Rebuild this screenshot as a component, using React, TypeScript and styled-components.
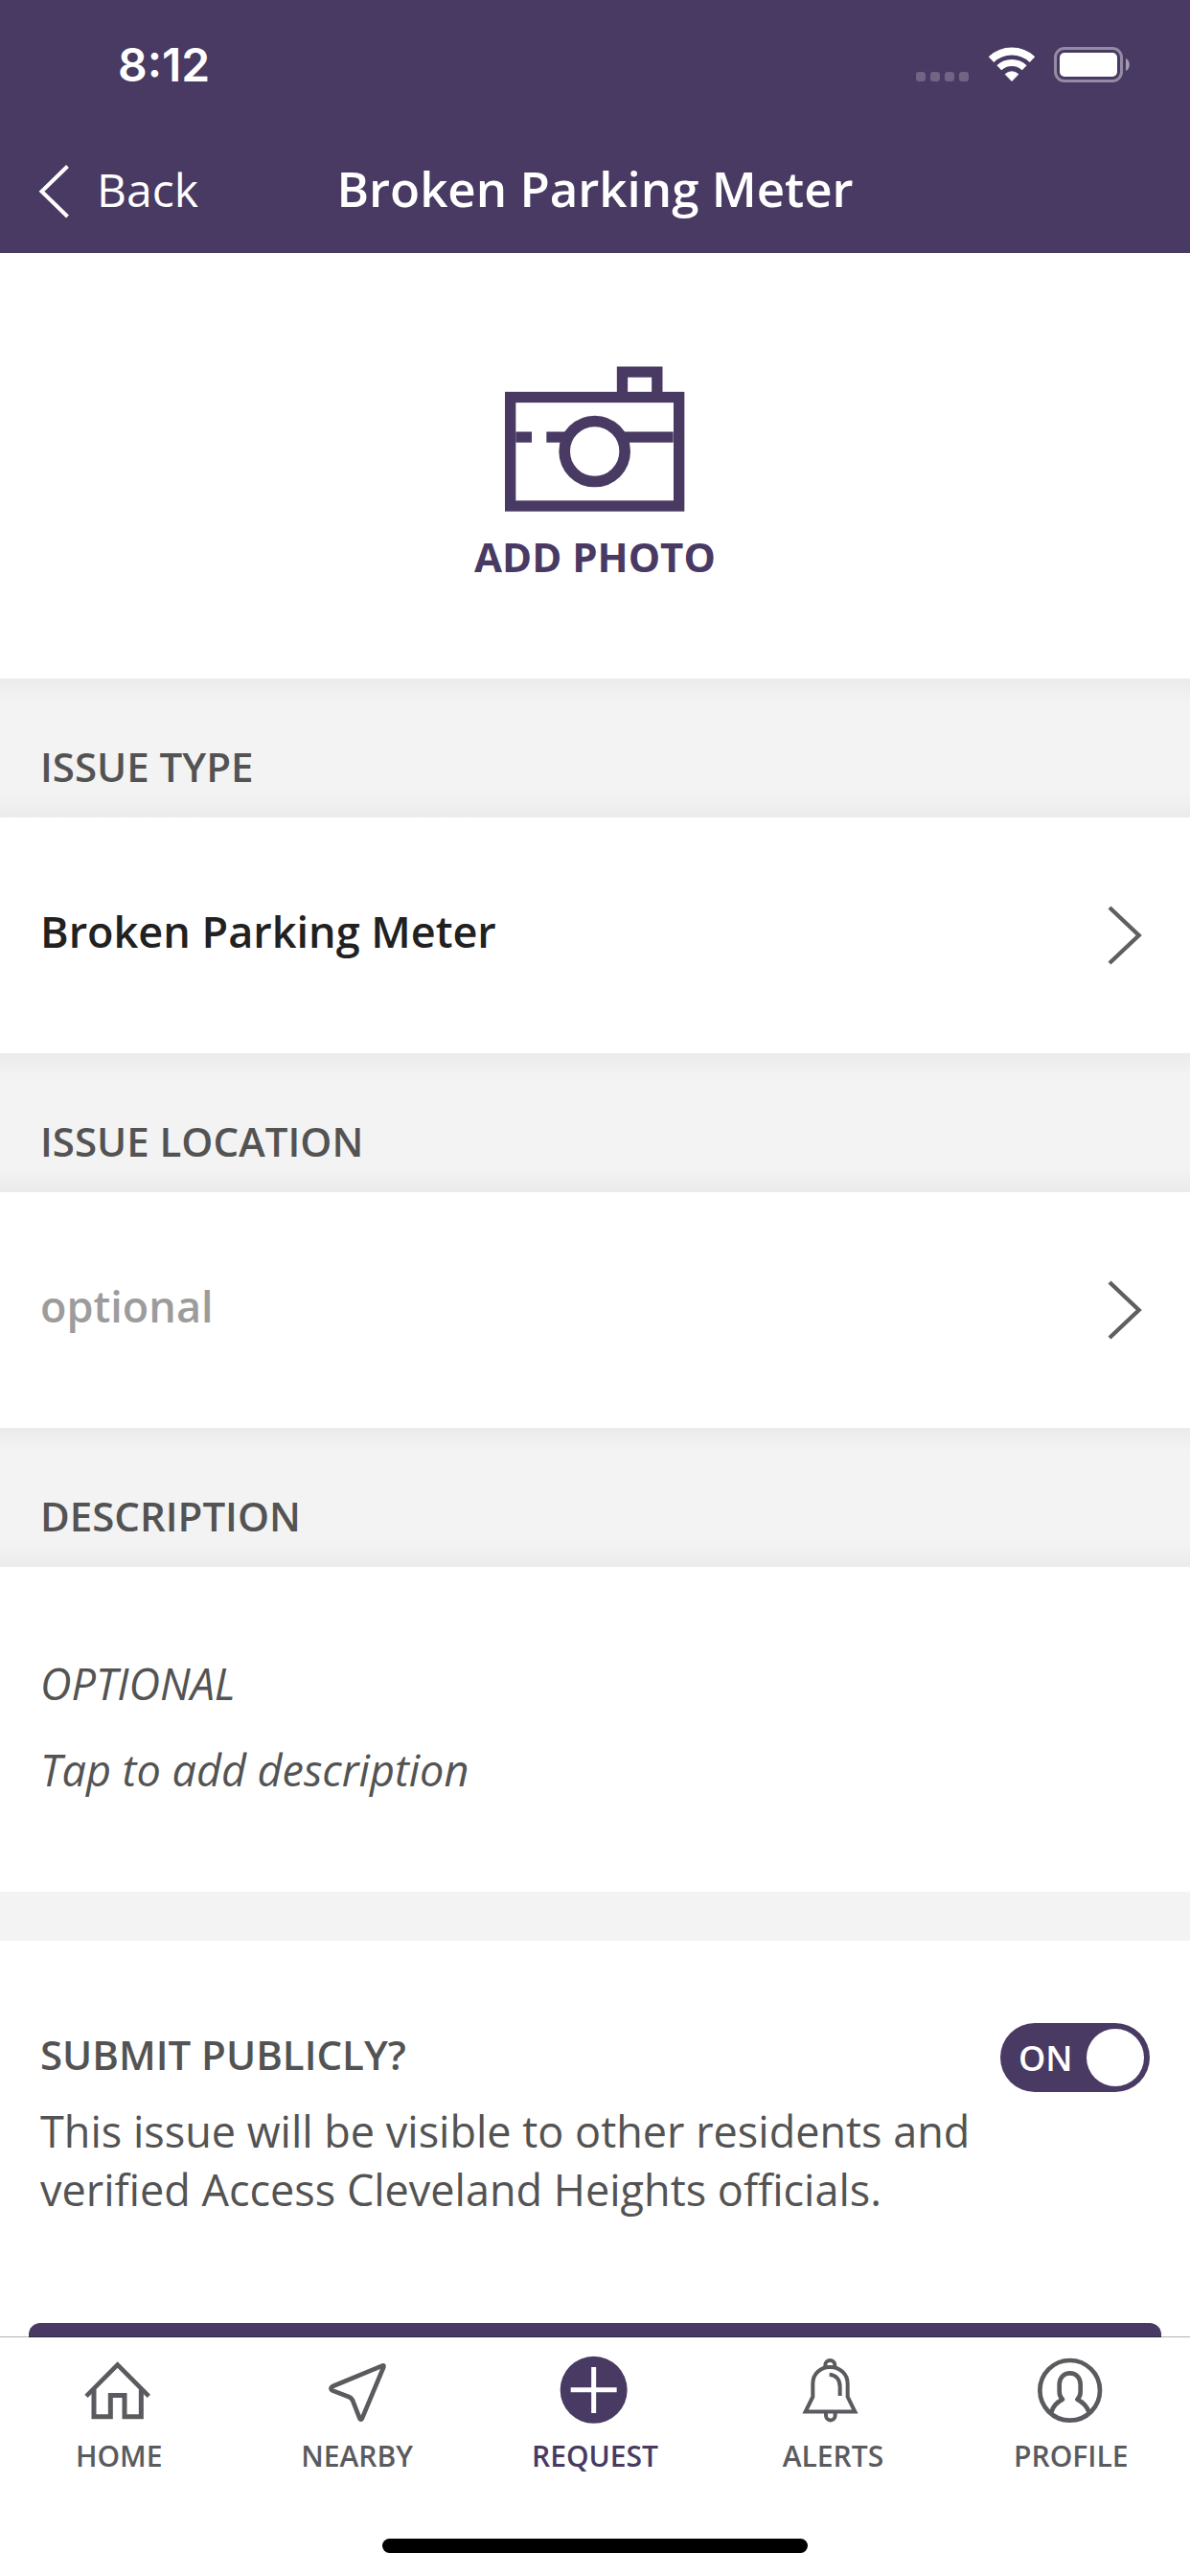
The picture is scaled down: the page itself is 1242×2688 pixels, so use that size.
import React, { useState } from "react";
import styled, { createGlobalStyle } from "styled-components";

const purple = "#483a62";
const grey = "#535353";
const iconGrey = "#5a5b5e";

const GlobalStyle = createGlobalStyle`
  *, *::before, *::after { box-sizing: border-box; }
  body {
    margin: 0;
    font-family: "Open Sans", "Noto Sans", sans-serif;
    background: #fff;
    color: ${grey};
  }
  button, input { font: inherit; color: inherit; }
  svg { display: block; flex: none; }
`;

const Screen = styled.div`
  display: flex;
  flex-direction: column;
  height: 100vh;
`;

const Header = styled.header`
  flex: none;
  background: ${purple};
  color: #fff;
`;

const StatusBar = styled.div`
  display: flex;
  align-items: center;
  gap: 20px;
  height: 135px;
  padding: 0 63px 0 123px;
`;

const Clock = styled.time`
  margin-right: auto;
  font-family: Inter, sans-serif;
  font-size: 48px;
  line-height: 58px;
  font-weight: 600;
`;

const NavBar = styled.div`
  display: grid;
  grid-template-columns: 1fr auto 1fr;
  align-items: center;
  height: 129px;
  padding: 0 40px;
`;

const BackButton = styled.button`
  display: flex;
  align-items: center;
  justify-self: start;
  gap: 28px;
  padding: 0;
  border: 0;
  background: none;
  font-size: 48px;
  line-height: 65px;
`;

const BackLabel = styled.span`
  padding-bottom: 4px;
`;

const Title = styled.h1`
  margin: 0;
  padding-bottom: 6px;
  font-size: 51px;
  line-height: 69px;
  font-weight: 600;
`;

const Content = styled.main`
  flex: 1;
  min-height: 0;
  overflow-y: auto;
  scrollbar-width: none;
`;

const PhotoButton = styled.button`
  display: flex;
  flex-direction: column;
  align-items: center;
  gap: 18px;
  width: 100%;
  padding: 118px 0 99px;
  border: 0;
  background: #fff;
  color: ${purple};
  font-size: 42px;
  line-height: 57px;
  font-weight: 700;
`;

const SectionTitle = styled.h2`
  margin: 0;
  padding: 63px 42px 25px;
  background:
    linear-gradient(#ebebeb, #f3f3f3) top / 100% 24px no-repeat,
    linear-gradient(#f3f3f3, #ebebeb) bottom / 100% 24px no-repeat,
    #f3f3f3;
  font-size: 42px;
  line-height: 57px;
  font-weight: 600;
`;

const PickerRow = styled.button`
  display: flex;
  align-items: center;
  justify-content: space-between;
  width: 100%;
  min-height: 246px;
  padding: 0 50px 0 42px;
  border: 0;
  background: #fff;
  text-align: left;
`;

const PickerValue = styled.span<{ $empty?: boolean }>`
  padding-bottom: 9px;
  font-size: 45px;
  line-height: 61px;
  font-weight: 600;
  color: ${(p) => (p.$empty ? "#9c9c9c" : "#212121")};
`;

const DescriptionField = styled.div`
  display: flex;
  flex-direction: column;
  gap: 29px;
  padding: 91px 42px 97px;
  font-size: 45px;
  line-height: 61px;
  font-style: italic;
`;

const DescriptionInput = styled.input`
  width: 100%;
  height: 61px;
  padding: 0;
  border: 0;
  outline: 0;
  background: none;
  &::placeholder {
    color: ${grey};
    opacity: 1;
  }
`;

const Divider = styled.div`
  height: 51px;
  background: #f3f3f3;
`;

const PublicSection = styled.section`
  display: flex;
  align-items: flex-start;
  padding: 86px 42px 109px;
`;

const PublicText = styled.div`
  flex: 1;
  display: flex;
  flex-direction: column;
  gap: 21px;
  padding-top: 4px;
`;

const PublicTitle = styled.h2`
  margin: 0;
  font-size: 42px;
  line-height: 57px;
  font-weight: 600;
`;

const PublicNote = styled.p`
  margin: 0;
  font-size: 45px;
  line-height: 61px;
`;

const Toggle = styled.label<{ $on: boolean }>`
  position: relative;
  display: flex;
  flex-direction: ${(p) => (p.$on ? "row" : "row-reverse")};
  align-items: center;
  justify-content: space-between;
  width: 156px;
  height: 72px;
  padding: 6px;
  border-radius: 36px;
  background: ${(p) => (p.$on ? purple : "#9c9c9c")};
  color: #fff;
  font-size: 36px;
  line-height: 49px;
  font-weight: 600;
  cursor: pointer;
`;

const ToggleInput = styled.input`
  position: absolute;
  inset: 0;
  width: 100%;
  height: 100%;
  margin: 0;
  opacity: 0;
`;

const ToggleText = styled.span`
  padding: 0 13px;
`;

const Knob = styled.span`
  width: 60px;
  height: 60px;
  border-radius: 50%;
  background: #fff;
`;

const SubmitArea = styled.div`
  padding: 0 30px 60px;
`;

const SubmitButton = styled.button`
  display: block;
  width: 100%;
  height: 144px;
  border: 0;
  border-radius: 12px;
  background: ${purple};
`;

const TabBar = styled.nav`
  position: relative;
  flex: none;
  display: flex;
  flex-direction: column;
  align-items: center;
  justify-content: space-between;
  height: 249px;
  padding: 19px 0 24px;
  background: #fff;
  box-shadow: 0 -1px 0 rgba(0, 0, 0, 0.3);
`;

const Tabs = styled.div`
  display: grid;
  grid-template-columns: repeat(5, 1fr);
  width: 100%;
`;

const Tab = styled.a<{ $active?: boolean }>`
  display: flex;
  flex-direction: column;
  align-items: center;
  gap: 12px;
  color: ${(p) => (p.$active ? purple : iconGrey)};
  font-size: 30px;
  line-height: 41px;
  font-weight: 600;
  text-decoration: none;
`;

const TabIcon = styled.svg`
  width: 72px;
  height: 72px;
  overflow: visible;
  fill: none;
  stroke: currentColor;
  stroke-width: 14;
`;

const HomeIndicator = styled.div`
  width: 444px;
  height: 15px;
  border-radius: 8px;
  background: #000;
`;

const SignalIcon = () => (
  <svg width="56" height="39" viewBox="0 0 56 39" fill="#fff" fillOpacity="0.22">
    {[0, 15, 30, 45].map((x) => (
      <rect key={x} x={x} y="27" width="10" height="10" rx="3" />
    ))}
  </svg>
);

const WifiIcon = () => (
  <svg width="48" height="39" viewBox="0 0 48 39" fill="none" stroke="#fff">
    <path d="M2.5 14.2A31 31 0 0 1 45.5 14.2" strokeWidth="8" />
    <path d="M10.8 22.8A19 19 0 0 1 37.2 22.8" strokeWidth="7" />
    <path d="M24 36.5L17.2 29.5A10 10 0 0 1 30.8 29.5Z" fill="#fff" strokeWidth="1" />
  </svg>
);

const BatteryIcon = () => (
  <svg width="79" height="39" viewBox="0 0 79 39" fill="#fff">
    <rect x="1.5" y="2.5" width="69" height="34" rx="9.5" fill="none" stroke="#fff" strokeOpacity="0.42" strokeWidth="3" />
    <rect x="6" y="7" width="60" height="25" rx="5" />
    <path d="M75 13C80 15 80 24 75 26Z" fillOpacity="0.5" />
  </svg>
);

const BackIcon = () => (
  <svg width="33" height="57" viewBox="0 0 33 57" fill="none" stroke="#fff" strokeWidth="4">
    <path d="M30.5 2.5L3.5 28.7L30.5 55" />
  </svg>
);

const CameraIcon = () => (
  <svg width="188" height="152" viewBox="201 94 564 456" fill="none" stroke={purple} strokeWidth="34">
    <rect x="218" y="191.5" width="528" height="340.5" />
    <path d="M568.5 180V112.5H677.5V180" />
    <path d="M235 316.5H285M331 316.5H395M570 316.5H728" />
    <circle cx="482" cy="361" r="94.5" strokeWidth="35" />
  </svg>
);

const ForwardIcon = () => (
  <svg width="36" height="62" viewBox="468 767 108 186" fill="none" stroke="#615e5f" strokeWidth="13">
    <path d="M474 773L566 860L474 947" />
  </svg>
);

const HomeIcon = () => (
  <TabIcon viewBox="264 174 216 216">
    <path d="M270 301L368 203L466 301" />
    <path d="M294 280V365.5H346V298.5H390V365.5H442V280" strokeWidth="15" />
  </TabIcon>
);

const NearbyIcon = () => (
  <TabIcon viewBox="1010 174 216 216">
    <path
      strokeLinejoin="round"
      d="M1196 206L1041 270Q1029 277 1041 284L1091 303Q1099 306 1103 314L1125 370Q1129 378 1133 370L1200 210Q1202 203 1196 206Z"
    />
  </TabIcon>
);

const RequestIcon = () => (
  <TabIcon viewBox="313 174 216 216">
    <circle cx="417" cy="281.5" r="105" fill={purple} stroke="none" />
    <path d="M417 210V354M345 281.5H489" stroke="#fff" strokeWidth="15" />
  </TabIcon>
);

const AlertsIcon = () => (
  <TabIcon viewBox="1060 174 216 216">
    <g strokeWidth="12">
      <path d="M1083 349.5L1106 303V262C1106 231 1130 210 1160 210S1215 231 1215 262V303L1238 349.5Z" />
      <path d="M1145 209V203A15 14 0 0 1 1175 203V209" />
      <path d="M1147 354V361A14 15 0 0 0 1176 361V354" />
      <path d="M1158 233C1180 235 1191 250 1191 272V300" />
    </g>
  </TabIcon>
);

const ProfileIcon = () => (
  <TabIcon viewBox="423 174 216 216">
    <circle cx="527" cy="283" r="94" />
    <path
      strokeLinejoin="round"
      d="M469 352C473 333 487 320 504 311C497 305 494 297 494 287V264C494 243 508 229 527 229S560 243 560 264V287C560 297 557 305 550 311C567 320 581 333 587 352"
    />
  </TabIcon>
);

const tabs = [
  { label: "HOME", Icon: HomeIcon },
  { label: "NEARBY", Icon: NearbyIcon },
  { label: "REQUEST", Icon: RequestIcon, active: true },
  { label: "ALERTS", Icon: AlertsIcon },
  { label: "PROFILE", Icon: ProfileIcon },
];

export default function App() {
  const [isPublic, setIsPublic] = useState(true);

  return (
    <>
      <GlobalStyle />
      <Screen>
        <Header>
          <StatusBar>
            <Clock>8:12</Clock>
            <SignalIcon />
            <WifiIcon />
            <BatteryIcon />
          </StatusBar>
          <NavBar>
            <BackButton type="button">
              <BackIcon />
              <BackLabel>Back</BackLabel>
            </BackButton>
            <Title>Broken Parking Meter</Title>
          </NavBar>
        </Header>

        <Content>
          <PhotoButton type="button">
            <CameraIcon />
            ADD PHOTO
          </PhotoButton>

          <SectionTitle>ISSUE TYPE</SectionTitle>
          <PickerRow type="button">
            <PickerValue>Broken Parking Meter</PickerValue>
            <ForwardIcon />
          </PickerRow>

          <SectionTitle>ISSUE LOCATION</SectionTitle>
          <PickerRow type="button">
            <PickerValue $empty>optional</PickerValue>
            <ForwardIcon />
          </PickerRow>

          <SectionTitle>DESCRIPTION</SectionTitle>
          <DescriptionField>
            <label htmlFor="description">OPTIONAL</label>
            <DescriptionInput id="description" type="text" placeholder="Tap to add description" />
          </DescriptionField>
          <Divider />

          <PublicSection>
            <PublicText>
              <PublicTitle id="public-title">SUBMIT PUBLICLY?</PublicTitle>
              <PublicNote>
                This issue will be visible to other residents and verified Access Cleveland Heights officials.
              </PublicNote>
            </PublicText>
            <Toggle $on={isPublic}>
              <ToggleInput
                type="checkbox"
                role="switch"
                aria-labelledby="public-title"
                checked={isPublic}
                onChange={(e) => setIsPublic(e.target.checked)}
              />
              <ToggleText>{isPublic ? "ON" : "OFF"}</ToggleText>
              <Knob />
            </Toggle>
          </PublicSection>
          <SubmitArea>
            <SubmitButton type="submit" aria-label="Submit" />
          </SubmitArea>
        </Content>

        <TabBar>
          <Tabs>
            {tabs.map(({ label, Icon, active }) => (
              <Tab key={label} href={`#${label.toLowerCase()}`} $active={active}>
                <Icon />
                {label}
              </Tab>
            ))}
          </Tabs>
          <HomeIndicator />
        </TabBar>
      </Screen>
    </>
  );
}
